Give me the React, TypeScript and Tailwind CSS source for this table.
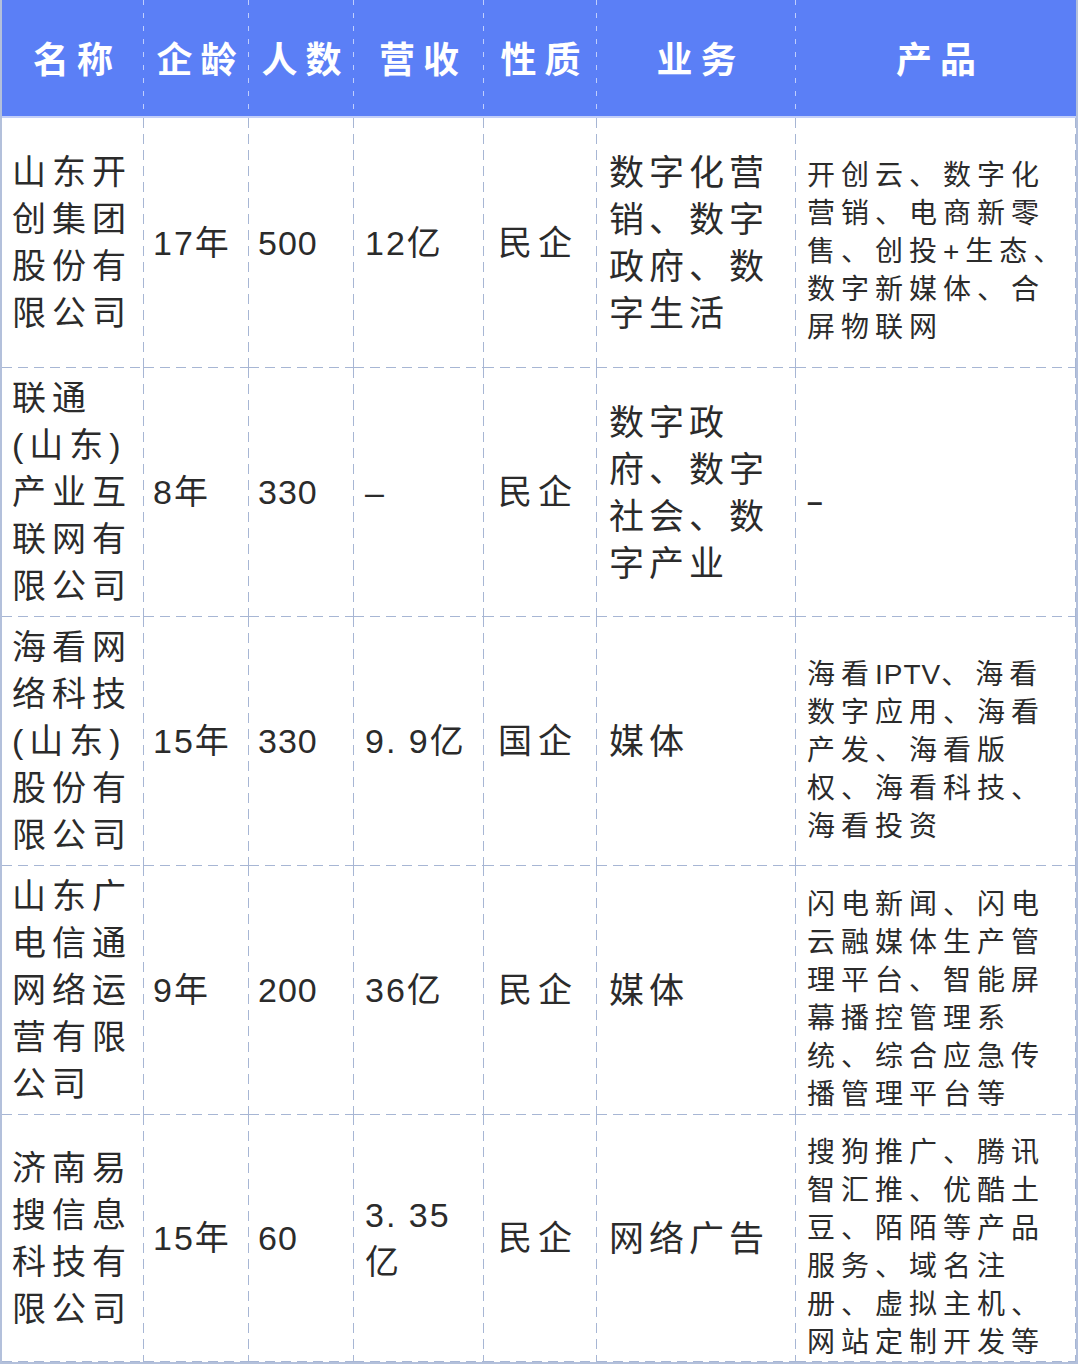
import React from 'react';

// dashed grid lines drawn as background gradients (right + bottom edge of each cell)
const cellLines =
  "bg-no-repeat [background-image:repeating-linear-gradient(to_bottom,#a7b6d4_0_10px,transparent_10px_16px),repeating-linear-gradient(to_right,#a7b6d4_0_10px,transparent_10px_16px)] [background-size:1px_100%,100%_1px] [background-position:right_top,left_bottom]";

const headLines =
  "bg-no-repeat [background-image:repeating-linear-gradient(to_bottom,rgba(225,232,255,0.75)_0_5px,transparent_5px_13px)] [background-size:1px_100%] [background-position:right_top]";

const headers = ['名称', '企龄', '人数', '营收', '性质', '业务', '产品'];

interface Row {
  name: string[];
  age: string;
  staff: string;
  revenue: string[];
  kind: string;
  business: string[];
  products: React.ReactNode[];
}

const rows: Row[] = [
  {
    name: ['山东开', '创集团', '股份有', '限公司'],
    age: '17年',
    staff: '500',
    revenue: ['12亿'],
    kind: '民企',
    business: ['数字化营', '销、数字', '政府、数', '字生活'],
    products: ['开创云、数字化', '营销、电商新零', '售、创投+生态、', '数字新媒体、合', '屏物联网'],
  },
  {
    name: ['联通', '(山东)', '产业互', '联网有', '限公司'],
    age: '8年',
    staff: '330',
    revenue: ['–'],
    kind: '民企',
    business: ['数字政', '府、数字', '社会、数', '字产业'],
    products: [<span className="font-bold">–</span>],
  },
  {
    name: ['海看网', '络科技', '(山东)', '股份有', '限公司'],
    age: '15年',
    staff: '330',
    revenue: ['9. 9亿'],
    kind: '国企',
    business: ['媒体'],
    products: [
      <>
        海看<span className="tracking-[1px]">IPTV</span>、海看
      </>,
      '数字应用、海看',
      '产发、海看版',
      '权、海看科技、',
      '海看投资',
    ],
  },
  {
    name: ['山东广', '电信通', '网络运', '营有限', '公司'],
    age: '9年',
    staff: '200',
    revenue: ['36亿'],
    kind: '民企',
    business: ['媒体'],
    products: ['闪电新闻、闪电', '云融媒体生产管', '理平台、智能屏', '幕播控管理系', '统、综合应急传', '播管理平台等'],
  },
  {
    name: ['济南易', '搜信息', '科技有', '限公司'],
    age: '15年',
    staff: '60',
    revenue: ['3. 35', '亿'],
    kind: '民企',
    business: ['网络广告'],
    products: ['搜狗推广、腾讯', '智汇推、优酷土', '豆、陌陌等产品', '服务、域名注', '册、虚拟主机、', '网站定制开发等'],
  },
];

const Lines: React.FC<{ lines: React.ReactNode[]; className: string }> = ({ lines, className }) => (
  <div className={className}>
    {lines.map((l, i) => (
      <div key={i} className="whitespace-nowrap">
        {l}
      </div>
    ))}
  </div>
);

export default function App() {
  return (
    <div className="w-[1080px] h-[1364px] bg-white font-['Liberation_Sans','Noto_Sans_CJK_SC',sans-serif] text-[#2b2b2b]">
      <div className="w-[1078px] h-[1364px] border-l-2 border-r-2 border-b-2 border-[#b3c0db] grid grid-cols-[142px_105px_105px_130px_113px_199px_1fr] grid-rows-[118px_250px_249px_249px_249px_1fr]">
        {/* header */}
        {headers.map((h, i) => (
          <div
            key={h}
            className={`bg-[#5b7ff6] border-b-2 border-[#c3cff8] flex items-center justify-center pl-[8px] pb-[2px] text-white text-[36px] font-bold tracking-[8px] font-['Noto_Sans_CJK_SC',sans-serif] ${
              i < headers.length - 1 ? headLines : ''
            }`}
          >
            {h}
          </div>
        ))}

        {/* body */}
        {rows.map((r, ri) => (
          <React.Fragment key={ri}>
            <div className={`${cellLines} flex items-center pl-[10px]`}>
              <Lines lines={r.name} className="text-[34px] leading-[47px] tracking-[6px]" />
            </div>
            <div className={`${cellLines} flex items-center pl-[9px]`}>
              <div className="text-[34px] tracking-[2px] whitespace-nowrap">{r.age}</div>
            </div>
            <div className={`${cellLines} flex items-center pl-[9px]`}>
              <div className="text-[34px] tracking-[1px] whitespace-nowrap">{r.staff}</div>
            </div>
            <div className={`${cellLines} flex items-center pl-[11px]`}>
              <Lines lines={r.revenue} className="text-[34px] leading-[47px] tracking-[2px]" />
            </div>
            <div className={`${cellLines} flex items-center pl-[14px]`}>
              <div className="text-[34px] tracking-[6px] whitespace-nowrap">{r.kind}</div>
            </div>
            <div className={`${cellLines} flex items-center pl-[12px]`}>
              <Lines lines={r.business} className="text-[35px] leading-[47px] tracking-[5px]" />
            </div>
            <div className={`${cellLines} flex items-center pl-[11px] pt-[18px]`}>
              <Lines lines={r.products} className="text-[28px] leading-[38px] tracking-[6px]" />
            </div>
          </React.Fragment>
        ))}
      </div>
    </div>
  );
}
